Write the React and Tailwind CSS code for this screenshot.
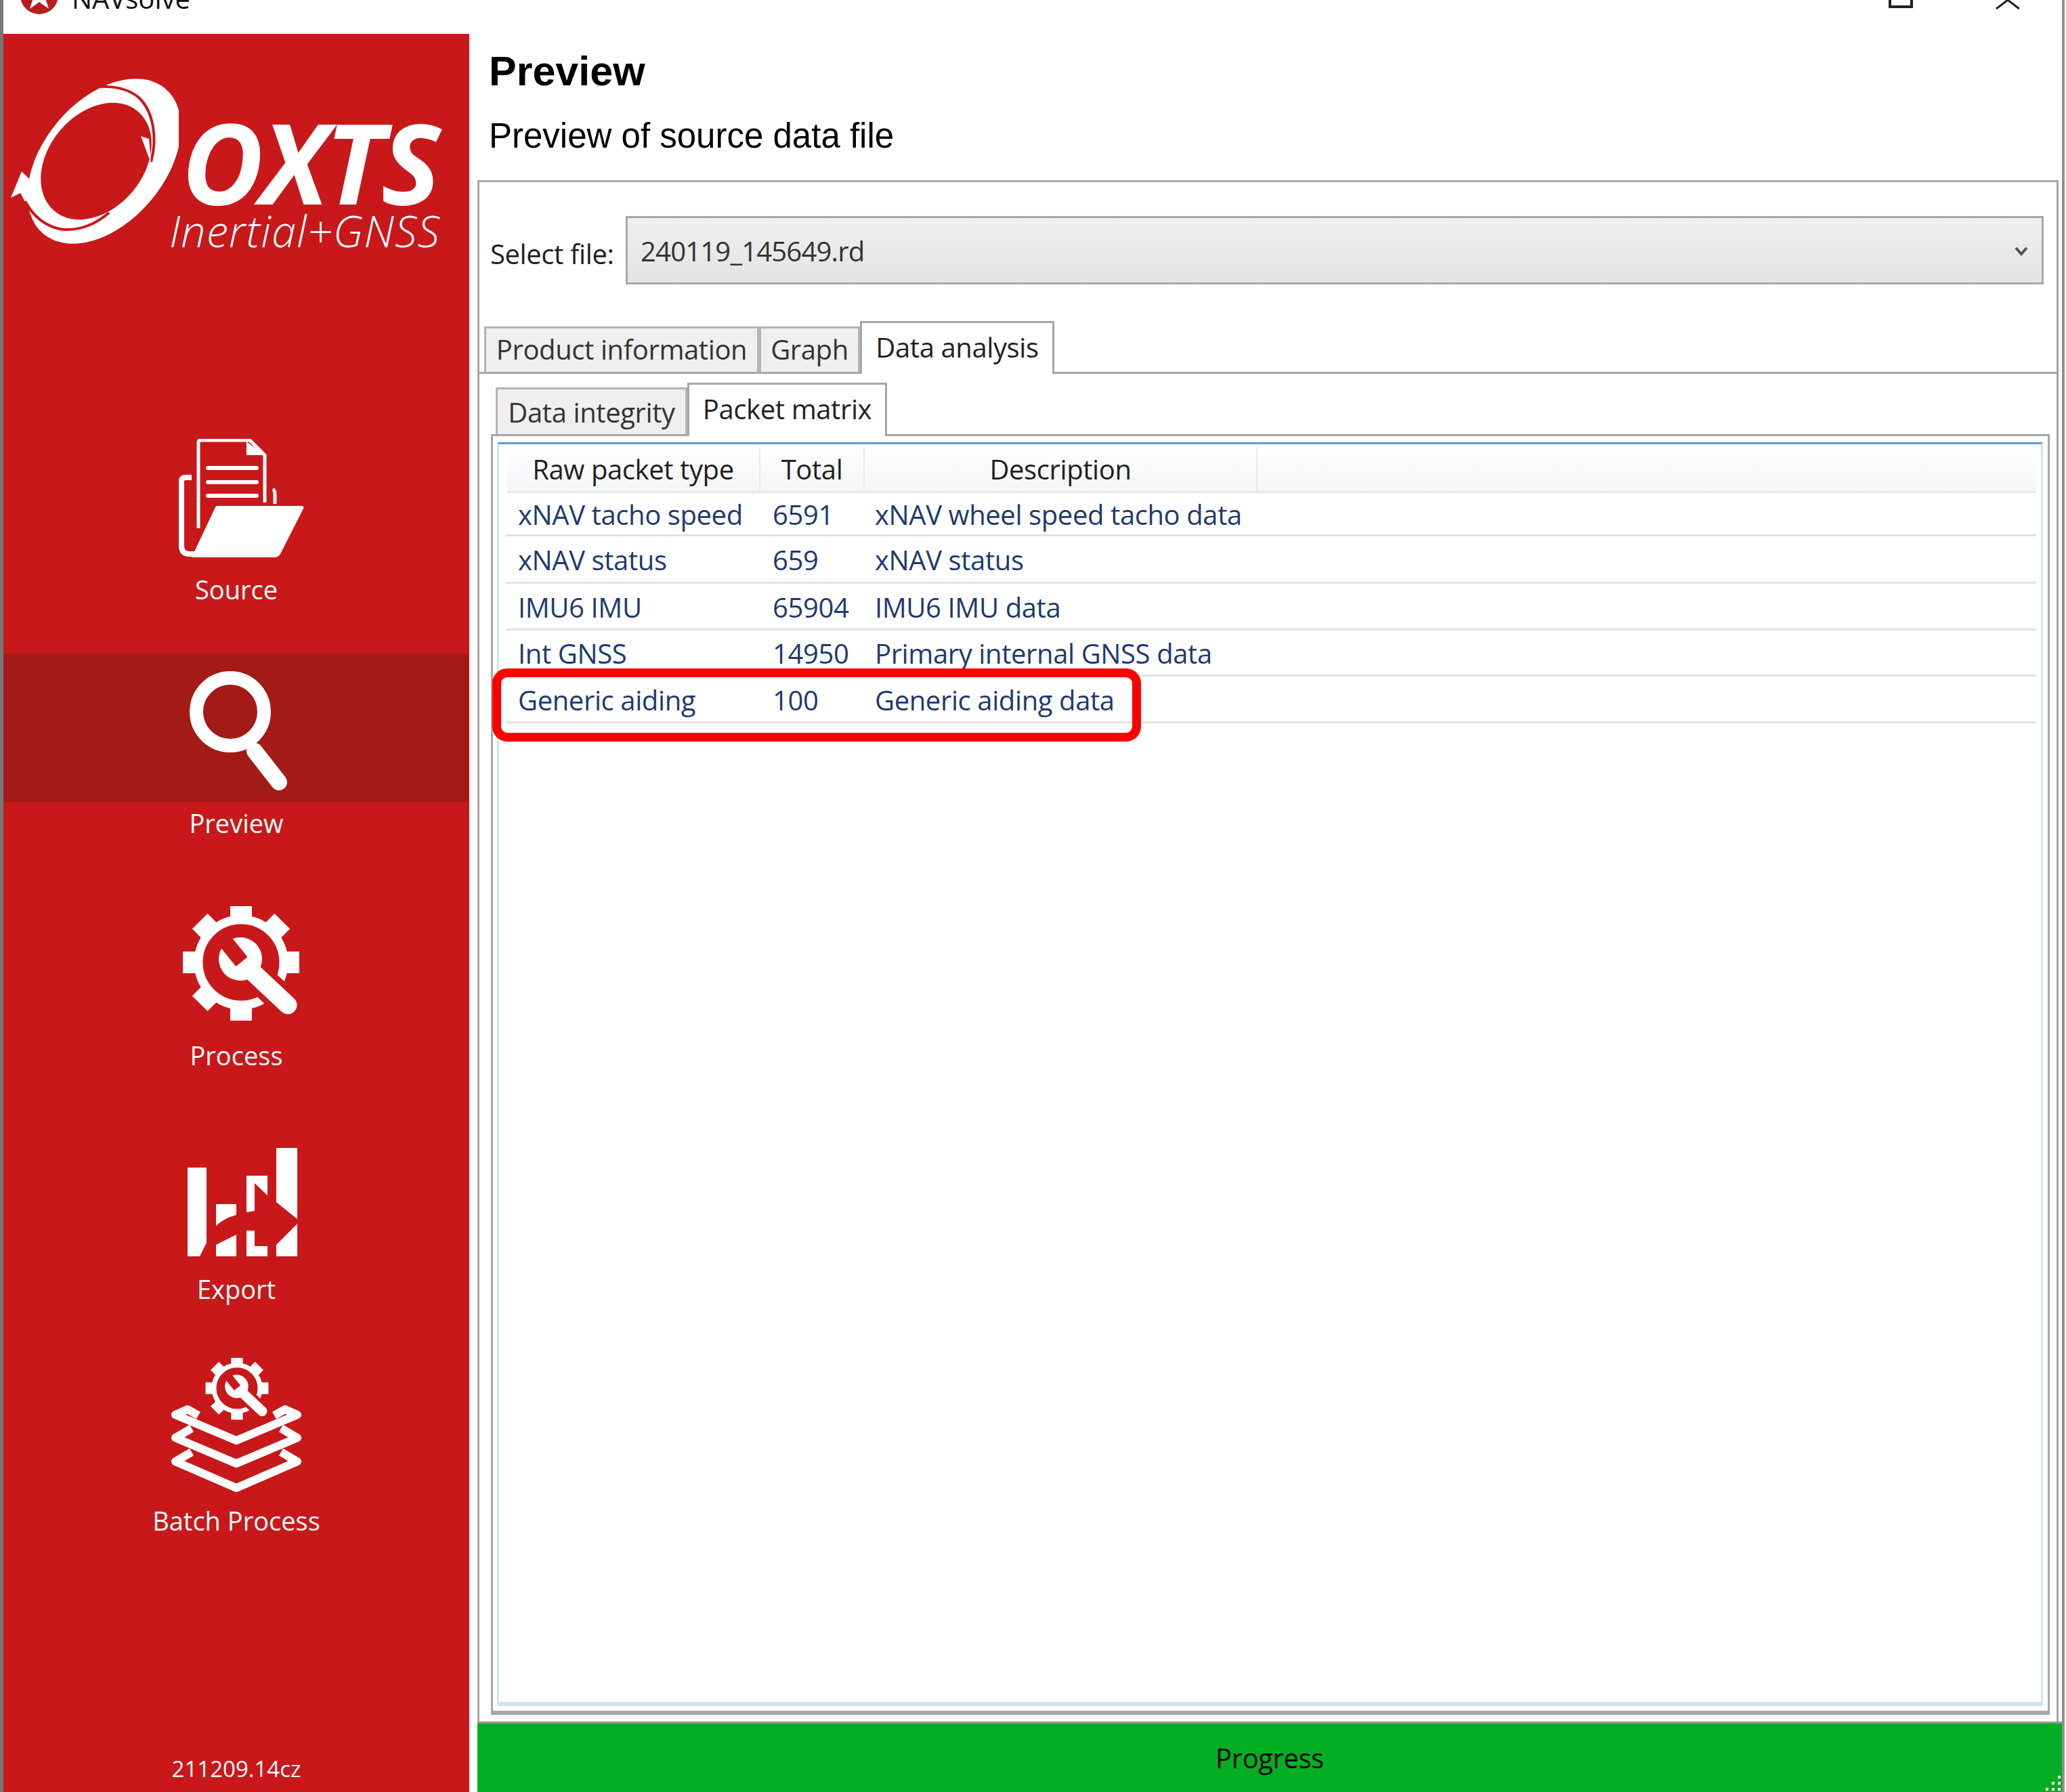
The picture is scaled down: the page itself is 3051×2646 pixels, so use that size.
const rows = [
  ['xNAV tacho speed', '6591', 'xNAV wheel speed tacho data', 'h-[64px]'],
  ['xNAV status', '659', 'xNAV status', 'h-[70px]'],
  ['IMU6 IMU', '65904', 'IMU6 IMU data', 'h-[69px]'],
  ['Int GNSS', '14950', 'Primary internal GNSS data', 'h-[68px]'],
  ['Generic aiding', '100', 'Generic aiding data', 'h-[69px]'],
];

function LogoRing() {
  return (
    <svg width="248" height="250" viewBox="0 0 248 250" className="shrink-0">
      <ellipse cx="138" cy="125" rx="140" ry="90" transform="rotate(-50 138 125)" fill="#fff" />
      <path d="M16 140 L0 179 L14 172 L32 205 L36 160 Z" fill="#fff" />
      <ellipse cx="126" cy="125" rx="96" ry="70" transform="rotate(-50 126 125)" fill="#c9181a" />
      <path d="M100 19 C130 12 168 12 190 32 C210 52 217 90 207 126" fill="none" stroke="#c9181a" strokeWidth="4" />
      <path d="M192 88 L204 92 L207 128 Z" fill="#fff" />
      <path d="M21 184 C32 205 52 224 80 226 C105 227 128 216 145 201" fill="none" stroke="#c9181a" strokeWidth="4" />
    </svg>
  );
}

function SourceIcon() {
  return (
    <svg width="187" height="175" viewBox="0 0 187 175" className="ml-[14px]">
      <path d="M30 132 V6 Q30 2 34 2 H106 L128 24 V94" fill="none" stroke="#fff" strokeWidth="5" />
      <path d="M101 4 L128 24 H101 Z" fill="#fff" />
      <path d="M44 43 H116 M44 64 H116 M44 84 H116" stroke="#fff" strokeWidth="6" strokeLinecap="round" />
      <path d="M20 57 H11 Q5 57 5 63 V158 Q5 170 17 170 H24" fill="none" stroke="#fff" strokeWidth="8" />
      <path d="M140 74 Q143 76 143 82 V96" fill="none" stroke="#fff" strokeWidth="5" />
      <path d="M57 99 H183 Q187 100 185 103 L151 170 Q148 175 142 175 H20 L54 103 Q55 100 57 99 Z" fill="#fff" />
    </svg>
  );
}

function SearchIcon() {
  return (
    <svg width="145" height="177" viewBox="0 0 145 177" className="ml-[6px]">
      <circle cx="60" cy="60" r="50" fill="none" stroke="#fff" strokeWidth="20" />
      <path d="M96 118 L132 164" stroke="#fff" strokeWidth="24" strokeLinecap="round" />
    </svg>
  );
}

function GearWrench() {
  const teeth = [0, 45, 90, 135, 180, 225, 270, 315];
  return (
    <g>
      <circle cx="87" cy="83" r="63" fill="none" stroke="#fff" strokeWidth="13" />
      {teeth.map((deg) => (
        <rect key={deg} x="71" y="-3" width="32" height="20" fill="#fff" transform={`rotate(${deg} 87 83)`} />
      ))}
      <path d="M92 86 L158 148" stroke="#c9181a" strokeWidth="44" strokeLinecap="round" />
      <circle cx="86" cy="78" r="32" fill="#fff" />
      <path d="M92 86 L156 146" stroke="#fff" strokeWidth="27" strokeLinecap="round" />
      <path d="M62 50 L88 82" stroke="#c9181a" strokeWidth="22" />
    </g>
  );
}

function ProcessIcon() {
  return (
    <svg width="174" height="172" viewBox="0 0 174 172" className="ml-[14px]">
      <GearWrench />
    </svg>
  );
}

function ExportIcon() {
  return (
    <svg width="162" height="160" viewBox="0 0 162 160" className="ml-[18px]" fill="#fff">
      <path d="M0 29 H28 V140 L18 160 H0 Z" />
      <path d="M42 83 H72 V99 Q55 103 42 115 Z" />
      <path d="M42 143 L72 128 V160 H42 Z" />
      <path d="M87 41 H118 V70 L99 52 V93 L87 95 Z" />
      <path d="M87 122 H99 V145 H118 V160 H87 Z" />
      <path d="M131 0 H162 V105 L131 80 Z" />
      <path d="M162 112 V160 H131 V143 Z" />
    </svg>
  );
}

function BatchIcon() {
  return (
    <svg width="193" height="200" viewBox="0 0 193 200">
      <g transform="translate(50 0) scale(0.54)">
        <GearWrench />
      </g>
      <g fill="none" stroke="#fff" strokeWidth="12" strokeLinejoin="round">
        <path d="M40 85 L24 76 L6 84 L96 122 L186 84 L168 76 L152 85" />
        <path d="M30 104 L6 118 L96 156 L186 118 L162 104" />
        <path d="M30 139 L6 153 L96 192 L186 153 L162 139" />
      </g>
    </svg>
  );
}

function NavLabel({ children, className }) {
  return <div className={`h-[52px] leading-[52px] text-[38px] text-white font-['Open_Sans',sans-serif] ${className}`}>{children}</div>;
}

function Sidebar() {
  return (
    <div className="w-[688px] shrink-0 bg-[#c9181a] flex flex-col items-center">
      <div className="w-full h-[598px] pt-[63px] pl-[11px] flex items-start gap-[4px]">
        <LogoRing />
        <div className="flex flex-col items-start">
          <div className="mt-[60px] h-[130px] leading-[130px] text-[166px] font-bold italic tracking-[-5px] text-white font-['Open_Sans',sans-serif]">OXTS</div>
          <div className="-ml-[18px] mt-[6px] h-[62px] leading-[62px] text-[65px] font-light italic tracking-[1px] text-white font-['Open_Sans',sans-serif] whitespace-nowrap">Inertial+GNSS</div>
        </div>
      </div>
      <SourceIcon />
      <NavLabel className="mt-[21px] mb-[69px]">Source</NavLabel>
      <div className="w-full h-[219px] pt-[26px] bg-[#a31a16] flex justify-center">
        <SearchIcon />
      </div>
      <NavLabel className="mt-[5px] mb-[97px]">Preview</NavLabel>
      <ProcessIcon />
      <NavLabel className="mt-[22px] mb-[111px]">Process</NavLabel>
      <ExportIcon />
      <NavLabel className="mt-[22px] mb-[76px]">Export</NavLabel>
      <BatchIcon />
      <NavLabel className="mt-[14px]">Batch Process</NavLabel>
      <div className="mt-auto mb-[12px] h-[44px] leading-[44px] text-[33px] text-white font-['Open_Sans',sans-serif]">211209.14cz</div>
    </div>
  );
}

function Tab({ label, active, className }) {
  if (active) {
    return (
      <div className={`relative -mb-[3px] bg-white border-[3px] border-b-0 border-[#a6a6a6] flex justify-center ${className}`}>
        {label}
      </div>
    );
  }
  return (
    <div className={`bg-[#efefef] border-[3px] border-b-0 border-[#b4b4b4] flex justify-center ${className}`}>
      {label}
    </div>
  );
}

function PacketTable() {
  return (
    <div className="relative flex-1 flex flex-col border-t-[3px] border-t-[#5b9bd0] border-x-[3px] border-x-[#cfe3f2] border-b-[6px] border-b-[#cfe3f2] pt-[4px] pl-[10px] pr-[7px]">
      <div className="flex h-[68px] ml-[2px] border-b-[3px] border-[#e6e8ea] bg-gradient-to-b from-white to-[#f3f5f7] text-[#1f1f1f]">
        <div className="w-[374px] border-r-2 border-[#e8eaec] text-center leading-[66px]">Raw packet type</div>
        <div className="w-[154px] border-r-2 border-[#e8eaec] text-center leading-[66px]">Total</div>
        <div className="w-[580px] border-r-2 border-[#e8eaec] text-center leading-[66px]">Description</div>
      </div>
      {rows.map((row) => (
        <div key={row[0]} className={`flex shrink-0 items-center pt-[3px] border-b-[3px] border-[#e2e2e2] text-[#1e3a6e] ${row[3]}`}>
          <div className="w-[394px] pl-[18px]">{row[0]}</div>
          <div className="w-[151px]">{row[1]}</div>
          <div>{row[2]}</div>
        </div>
      ))}
      <div className="absolute left-[-10px] top-[331px] w-[958px] h-[108px] border-[13px] border-[#ff0000] rounded-[22px]"></div>
    </div>
  );
}

function ResizeGrip() {
  return (
    <svg width="24" height="26" viewBox="0 0 24 26" className="absolute right-0 bottom-0" fill="#fff">
      <rect x="18" y="2" width="4" height="4" />
      <rect x="18" y="11" width="4" height="4" />
      <rect x="9" y="11" width="4" height="4" />
      <rect x="18" y="20" width="4" height="4" />
      <rect x="9" y="20" width="4" height="4" />
      <rect x="0" y="20" width="4" height="4" />
    </svg>
  );
}

function MainPanel() {
  return (
    <div className="flex-1 min-w-0 flex flex-col pl-[12px] text-[40px] tracking-[-0.4px] font-['Open_Sans',sans-serif]">
      <div className="h-[216px] pl-[17px] pt-[21px] text-black font-['Liberation_Sans',sans-serif] tracking-normal">
        <div className="h-[68px] leading-[68px] text-[61px] font-bold">Preview</div>
        <div className="mt-[35px] h-[54px] leading-[54px] text-[51px]">Preview of source data file</div>
      </div>
      <div className="flex-1 min-h-0 flex flex-col border-t-[3px] border-x-[3px] border-[#a6a6a6] mr-[5px]">
        <div className="h-[206px] shrink-0 flex items-start pl-[16px] pr-[19px] pt-[50px]">
          <div className="w-[200px] h-[101px] leading-[112px] text-[#1f1f1f]">Select file:</div>
          <div className="flex-1 h-[101px] border-[3px] border-[#a8a8a8] bg-gradient-to-b from-[#f0f0f0] to-[#e3e3e3] flex items-center pl-[19px] pr-[20px] pt-[2px] text-[#333] tracking-[-0.8px]">
            <span className="flex-1">240119_145649.rd</span>
            <svg width="20" height="16" viewBox="0 0 20 16">
              <path d="M2 3 L10 12 L18 3" fill="none" stroke="#555" strokeWidth="4" />
            </svg>
          </div>
        </div>
        <div className="h-[77px] shrink-0 flex items-end pl-[7px] border-b-[3px] border-[#a6a6a6]">
          <Tab label="Product information" className="w-[406px] h-[67px] leading-[62px] text-[#333]" />
          <Tab label="Graph" className="w-[149px] h-[67px] leading-[62px] text-[#333]" />
          <Tab label="Data analysis" active className="w-[287px] h-[78px] leading-[72px] text-[#222]" />
        </div>
        <div className="flex-1 min-h-0 flex flex-col pl-[17px] pr-[10px] pb-[10px] pt-[15px]">
          <div className="h-[77px] shrink-0 flex items-end pl-[7px] border-b-[3px] border-[#a6a6a6]">
            <Tab label="Data integrity" className="w-[283px] h-[69px] leading-[68px] text-[#333]" />
            <Tab label="Packet matrix" active className="w-[295px] h-[79px] leading-[72px] text-[#222]" />
          </div>
          <div className="flex-1 min-h-0 flex flex-col pl-[6px] pr-[7px] pt-[9px] pb-[7px] border-x-[3px] border-b-[6px] border-[#a6a6a6]">
            <PacketTable />
          </div>
        </div>
      </div>
      <div className="relative h-[104px] shrink-0 bg-[#04ae22] border-t-[3px] border-[#8a9a8a] flex items-center justify-center text-black">
        Progress
        <ResizeGrip />
      </div>
    </div>
  );
}

function AppIcon() {
  return (
    <svg width="56" height="56" viewBox="0 0 56 56" className="-mt-[35px] shrink-0">
      <circle cx="28" cy="28" r="28" fill="#b81c1e" />
      <path d="M28 6 L34 22 L50 22 L37 32 L42 48 L28 38 L14 48 L19 32 L6 22 L22 22 Z" fill="#fff" />
    </svg>
  );
}

export default function App() {
  return (
    <div className="w-[3051px] h-[2646px] overflow-hidden bg-white flex flex-col">
      <div className="h-[50px] shrink-0 mr-[2px] border-l-[5px] border-r-[4px] border-l-[#777] border-r-[#8f8f8f] overflow-hidden flex items-start pl-[25px]">
        <AppIcon />
        <div className="-mt-[30px] ml-[20px] h-[56px] leading-[56px] text-[40px] text-[#111] font-['Open_Sans',sans-serif]">NAVsolve</div>
        <div className="-mt-[4px] ml-auto w-[36px] h-[16px] border-[4px] border-[#222]"></div>
        <svg width="36" height="14" viewBox="0 0 36 14" className="ml-[122px] mr-[62px]">
          <path d="M1 13 L18 0 L35 13" fill="none" stroke="#222" strokeWidth="3" />
        </svg>
      </div>
      <div className="flex-1 min-h-0 mr-[2px] flex border-l-[5px] border-r-[4px] border-l-[#777] border-r-[#8f8f8f]">
        <Sidebar />
        <MainPanel />
      </div>
    </div>
  );
}
